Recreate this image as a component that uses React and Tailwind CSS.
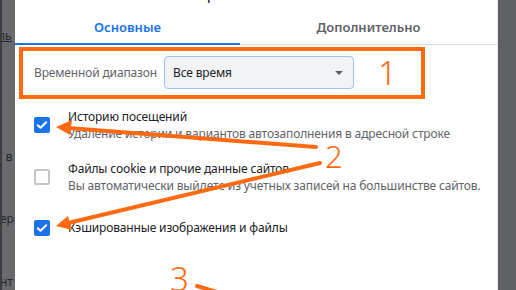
const ORANGE = '#ff6a10';

function Checkbox({ checked }) {
  if (checked) {
    return (
      <span className="flex h-4 w-4 shrink-0 items-center justify-center rounded-[2px] bg-[#1a73e8]">
        <svg viewBox="0 0 16 16" className="h-4 w-4">
          <path d="M3.8 8.2l2.7 2.6 5.7-5.6" fill="none" stroke="#fff" strokeWidth="2" strokeLinecap="round" strokeLinejoin="round" />
        </svg>
      </span>
    );
  }
  return <span className="h-4 w-4 shrink-0 rounded-[2px] border-2 border-[#c4c7ca] bg-white" />;
}

function Option({ checked, title, subtitle, className }) {
  return (
    <div className={`flex items-center gap-[18px] pl-[19px] ${className}`}>
      <Checkbox checked={checked} />
      <div className="whitespace-nowrap text-[12px] leading-[17px] tracking-[-0.15px]">
        <div className="text-[#202124]">{title}</div>
        {subtitle ? <div className="text-[#5f6368]">{subtitle}</div> : null}
      </div>
    </div>
  );
}

function Annotations() {
  return (
    <>
      <div
        className="absolute left-[19px] top-[47px] h-[52px] w-[406px] border-4"
        style={{ borderColor: ORANGE }}
      />
      <span className="absolute left-[378px] top-[56px] text-[33px] font-light leading-[34px] text-[#ff6a10]">1</span>
      <span className="absolute left-[325px] top-[141px] text-[31px] font-light leading-[31px] text-[#ff6a10]">2</span>
      <span className="absolute left-[170px] top-[262px] text-[33px] font-light leading-[34px] text-[#ff6a10]">3</span>
      <svg className="pointer-events-none absolute left-0 top-0" width="516" height="290" viewBox="0 0 516 290">
        <g stroke={ORANGE} strokeWidth="4" strokeLinecap="round" fill={ORANGE}>
          <line x1="316" y1="147" x2="68" y2="128" />
          <polygon points="56,127 72,120 70,135" stroke="none" />
          <line x1="320" y1="163" x2="68" y2="223" />
          <polygon points="56,226 68,216 72,230" stroke="none" />
          <line x1="197" y1="286" x2="230" y2="296" />
        </g>
      </svg>
    </>
  );
}

export default function App() {
  return (
    <div
      className="relative flex h-[290px] w-[516px] overflow-hidden bg-white"
      style={{ fontFamily: '"Noto Sans", "Open Sans", sans-serif' }}
    >
      <div className="relative w-[15px] shrink-0 overflow-hidden whitespace-nowrap border-l-2 border-[#3d3d3f] bg-[#6a6a6c] text-[12px] text-[#1e2630]">
        <span className="absolute left-[-4px] top-[27px] underline">ль</span>
        <span className="absolute left-[-6px] top-[148px]">ь в</span>
        <span className="absolute left-[-2px] top-[210px]">ерi</span>
        <span className="absolute left-[-2px] top-[273px]">нт</span>
      </div>

      <div className="flex w-[482px] shrink-0 flex-col bg-white">
        <div className="h-[3px] overflow-hidden pl-[80px]">
          <div className="mt-[-15px] text-[16px] leading-[18px] text-[#202124]">Очистить историю</div>
        </div>
        <div className="flex h-[42px]">
          <div className="flex w-[225px] items-end justify-center border-b-2 border-[#1a73e8] pb-[8px] text-[13px] font-semibold leading-[16px] text-[#1a73e8]">
            Основные
          </div>
          <div className="flex flex-1 items-end justify-center border-b border-[#dadce0] pb-[9px] text-[13px] font-semibold leading-[16px] text-[#5f6368]">
            Дополнительно
          </div>
        </div>

        <div className="mt-[11px] flex h-[33px] items-center pl-[19px]">
          <span className="w-[130px] whitespace-nowrap text-[12px] tracking-[-0.15px] text-[#5f6368]">Временной диапазон</span>
          <div className="flex h-[33px] w-[190px] items-center justify-between rounded-[4px] border border-[#9cc3f5] bg-[#f1f3f4] pl-[8px] pr-[10px] text-[12px] tracking-[-0.15px] text-[#202124]">
            <span>Все время</span>
            <span className="h-0 w-0 border-x-[4px] border-t-[4px] border-x-transparent border-t-[#5f6368]" />
          </div>
        </div>

        <Option
          className="mt-[19px]"
          checked
          title="Историю посещений"
          subtitle="Удаление истории и вариантов автозаполнения в адресной строке"
        />
        <Option
          className="mt-[18px]"
          title="Файлы cookie и прочие данные сайтов"
          subtitle="Вы автоматически выйдете из учетных записей на большинстве сайтов."
        />
        <Option className="mt-[25px]" checked title="Кэшированные изображения и файлы" />
      </div>

      <div className="flex-1 border-l border-[#e8e8ea] bg-[#5f6063]" />

      <Annotations />
    </div>
  );
}
